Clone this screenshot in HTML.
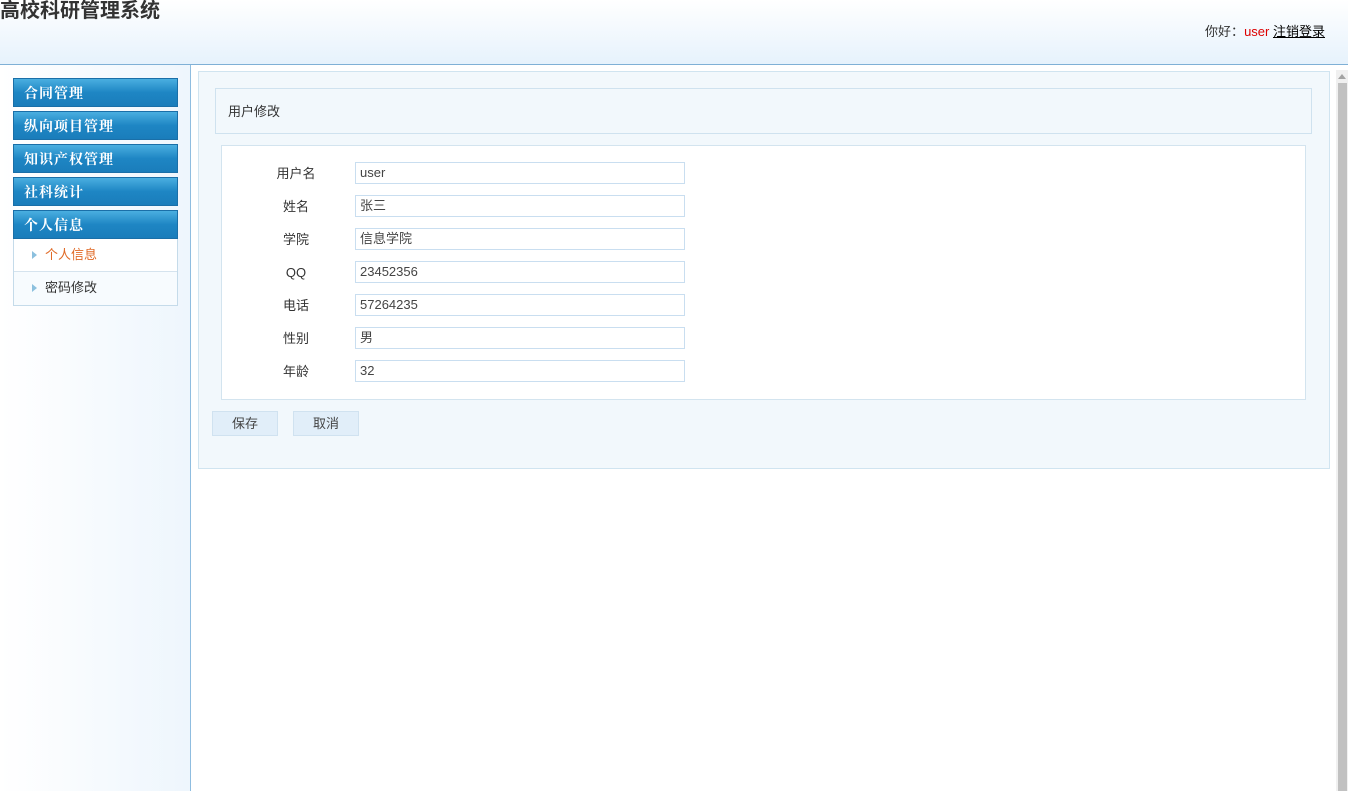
<!DOCTYPE html>
<html><head><meta charset="utf-8"><style>
*{margin:0;padding:0;box-sizing:border-box}
body{width:1348px;height:791px;overflow:hidden;font-family:"Liberation Sans","Noto Sans CJK SC",sans-serif;font-size:13px;color:#333;background:#fff;position:relative}
.hd{position:absolute;left:0;top:0;width:1348px;height:65px;background:linear-gradient(#fff,#e6f2fc);border-bottom:1px solid #7fb0d6}
.hd h1{position:absolute;left:0;top:0;font-size:20px;font-weight:bold;color:#333;line-height:22px}
.hd .u{position:absolute;right:23px;top:21px;font-size:13px;color:#333}
.hd .u span{color:#d00}
.hd .u a{color:#000;text-decoration:underline}
.side{position:absolute;left:0;top:65px;width:191px;height:726px;background:linear-gradient(90deg,#fff,#eef6fd);border-right:1px solid #8fbde0}
.m{position:absolute;left:13px;width:165px;height:29px;background:linear-gradient(#4aaee0,#1e86c4 50%,#1a7dbb);border:1px solid #1a6fa8;color:#fff;font-weight:bold;font-size:14px;line-height:31px;padding-left:10px;font-family:"Liberation Serif","Noto Serif CJK SC",serif;letter-spacing:1px}
.sub{position:absolute;left:13px;top:238px;width:165px;height:67px;border:1px solid #c5dbea;border-top:none;background:#fff}
.sub div{height:33px;line-height:32px;padding-left:31px;position:relative;border-bottom:1px solid #d5e3ee}
.sub div:last-child{border-bottom:none;background:#f7fbfe}
.sub div:before{content:"";position:absolute;left:18px;top:12px;border-left:5px solid #8cc0de;border-top:4px solid transparent;border-bottom:4px solid transparent}
.sb{position:absolute;left:1336px;top:70px;width:12px;height:721px;background:#f0f0f0}
.sb i{position:absolute;left:2px;top:13px;width:9px;height:708px;background:#c1c1c1}
.sb b{position:absolute;left:2px;top:4px;border-bottom:5px solid #a3a3a3;border-left:4px solid transparent;border-right:4px solid transparent}
.pn{position:absolute;left:198px;top:71px;width:1132px;height:398px;background:#f2f8fc;border:1px solid #d0e4f0}
.tt{position:absolute;left:16px;top:16px;width:1097px;height:46px;border:1px solid #cfe2ef;background:#f2f8fc;line-height:46px;padding-left:12px}
.fm{position:absolute;left:22px;top:73px;width:1085px;height:255px;background:#fff;border:1px solid #d3e4ef}
.r{position:absolute;left:0;width:100%;height:22px}
.r label{position:absolute;left:34px;width:80px;text-align:center;top:0;line-height:24px}
.r div{position:absolute;left:133px;top:0;width:330px;height:22px;border:1px solid #c9def0;padding-left:4px;line-height:19px;color:#444}
.bt{position:absolute;top:339px;width:66px;height:25px;background:#e1eef9;border:1px solid #d0e2f0;text-align:center;line-height:24px;color:#444}
</style></head><body>
<div class="hd"><h1>高校科研管理系统</h1><div class="u">你好：<span>user</span> <a>注销登录</a></div></div>
<div class="side">
<div class="m" style="top:13px">合同管理</div>
<div class="m" style="top:46px">纵向项目管理</div>
<div class="m" style="top:79px">知识产权管理</div>
<div class="m" style="top:112px">社科统计</div>
<div class="m" style="top:145px">个人信息</div>
<div class="sub" style="top:174px"><div style="color:#e06a26">个人信息</div><div>密码修改</div></div>
</div>
<div class="pn">
<div class="tt">用户修改</div>
<div class="fm">
<div class="r" style="top:16px"><label>用户名</label><div>user</div></div>
<div class="r" style="top:49px"><label>姓名</label><div>张三</div></div>
<div class="r" style="top:82px"><label>学院</label><div>信息学院</div></div>
<div class="r" style="top:115px"><label>QQ</label><div>23452356</div></div>
<div class="r" style="top:148px"><label>电话</label><div>57264235</div></div>
<div class="r" style="top:181px"><label>性别</label><div>男</div></div>
<div class="r" style="top:214px"><label>年龄</label><div>32</div></div>
</div>
<div class="bt" style="left:13px">保存</div>
<div class="bt" style="left:94px">取消</div>
</div>
<div class="sb"><b></b><i></i></div>
</body></html>
